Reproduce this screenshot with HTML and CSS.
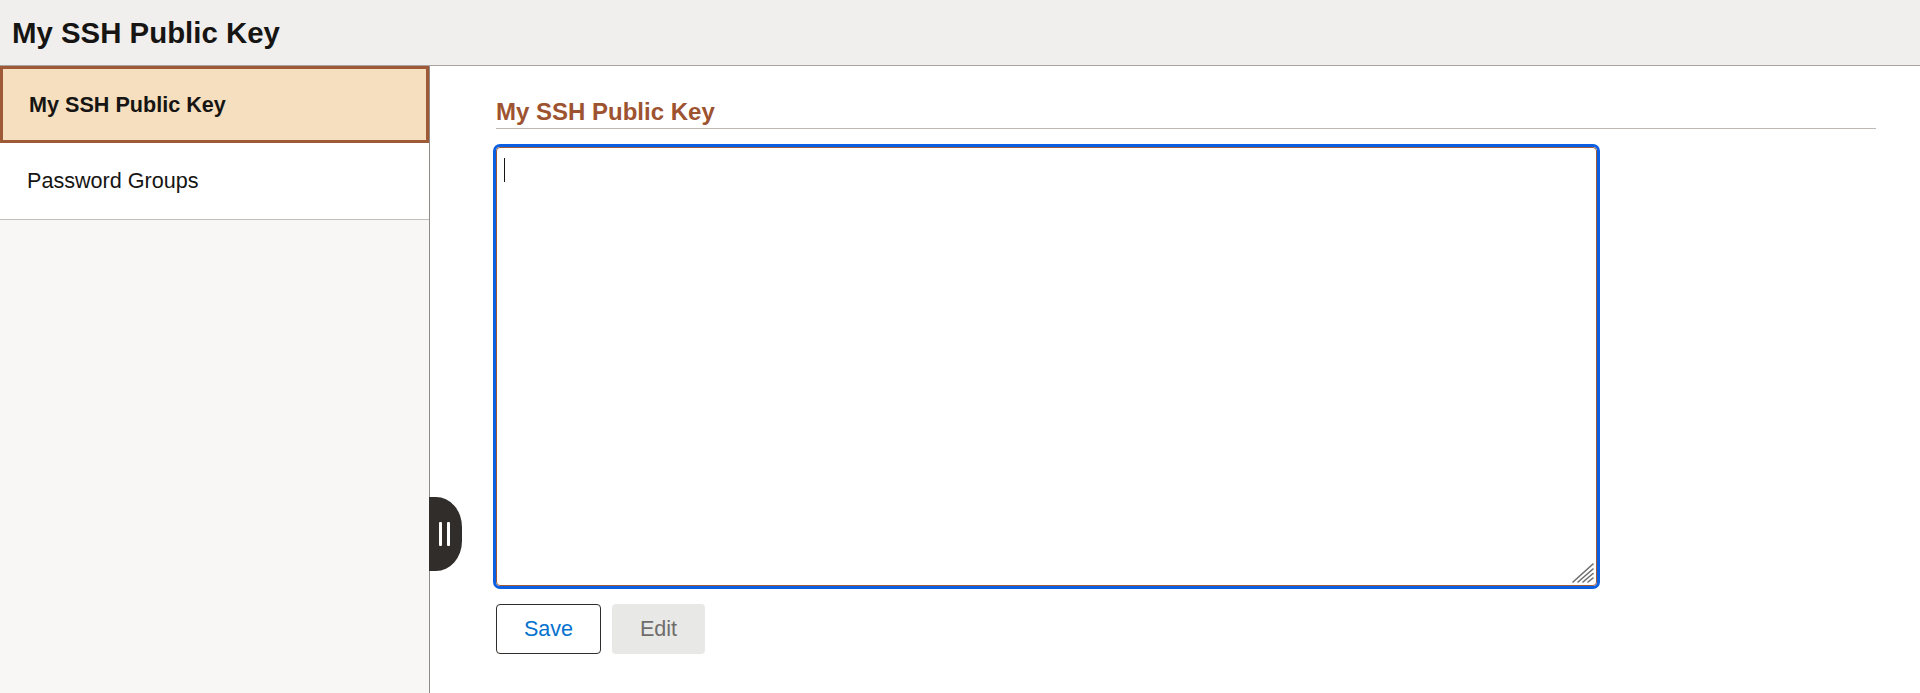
FILE: index.html
```html
<!DOCTYPE html>
<html lang="en">
<head>
    <meta charset="UTF-8">
    <meta name="viewport" content="width=device-width, initial-scale=1.0">
    <title>My SSH Public Key</title>
    <link rel="stylesheet" href="styles.css">
</head>
<body>
<header class="page-header">
    <h1>My SSH Public Key</h1>
</header>
<div class="layout">
    <aside class="sidebar">
        <ul class="nav-list">
            <li class="nav-item active">My SSH Public Key</li>
            <li class="nav-item">Password Groups</li>
        </ul>
        <div class="collapse-handle">
            <span class="bar"></span>
            <span class="bar"></span>
        </div>
    </aside>
    <main class="content">
        <h2 class="section-title">My SSH Public Key</h2>
        <div class="key-field">
            <textarea class="key-input" autofocus></textarea>
            <span class="caret"></span>
            <!-- resize grip -->
            <svg class="grip" width="22" height="20" viewBox="0 0 22 20">
                <g stroke="#6e6e6e" stroke-width="1.6" stroke-linecap="round">
                    <line x1="1" y1="19" x2="21" y2="1"/>
                    <line x1="6" y1="19" x2="21" y2="6"/>
                    <line x1="11" y1="19" x2="21" y2="10.5"/>
                    <line x1="16" y1="19" x2="21" y2="15"/>
                </g>
            </svg>
        </div>
        <div class="actions">
            <button class="btn btn-save">Save</button>
            <button class="btn btn-edit" disabled>Edit</button>
        </div>
    </main>
</div>
</body>
</html>
```

FILE: styles.css
```css
/* General Styles */
body {
    font-family: "Liberation Sans", Arial, sans-serif;
    margin: 0;
    padding: 0;
    color: #161513;
    background-color: #fff;
}

/* Header */
.page-header {
    display: flex;
    align-items: center;
    height: 65px;
    padding-left: 12px;
    background-color: #f1efed;
    border-bottom: 1px solid #a9a39f;
}

.page-header h1 {
    margin: 0;
    font-size: 29.4px;
    font-weight: 700;
}

/* Layout */
.layout {
    display: flex;
    height: calc(100vh - 66px);
}

/* Sidebar */
.sidebar {
    position: relative;
    width: 429px;
    flex-shrink: 0;
    background-color: #f8f7f5;
    border-right: 1px solid #8f8a86;
}

.nav-list {
    list-style: none;
    margin: 0;
    padding: 0;
}

.nav-item {
    display: flex;
    align-items: center;
    height: 76px;
    padding-left: 27px;
    font-size: 21.6px;
    background-color: #fff;
    border-bottom: 1px solid #c4bfbb;
}

.nav-item.active {
    height: 71px;
    padding-left: 26px;
    font-weight: 700;
    background-color: #f5dfbf;
    border: 3px solid #9e5a36;
}

.collapse-handle {
    position: absolute;
    top: 431px;
    left: 429px;
    width: 33px;
    height: 74px;
    display: flex;
    align-items: center;
    gap: 5px;
    padding-left: 10px;
    box-sizing: border-box;
    background-color: #312d2a;
    border-radius: 0 26px 26px 0 / 0 30px 30px 0;
}

.collapse-handle .bar {
    display: block;
    width: 3px;
    height: 24px;
    background-color: #fff;
    border-radius: 1px;
}

/* Main Content */
.content {
    flex: 1;
    padding: 32px 44px 0 66px;
}

.section-title {
    margin: 0;
    font-size: 24px;
    line-height: 28px;
    font-weight: 700;
    color: #9e5330;
    padding-bottom: 2px;
    border-bottom: 1px solid #bfb8b2;
}

.key-field {
    position: relative;
    width: 1101px;
    margin-top: 18px;
}

.key-input {
    display: block;
    box-sizing: border-box;
    width: 1101px;
    height: 439px;
    padding: 10px 7px;
    font-family: "Liberation Sans", Arial, sans-serif;
    font-size: 21.6px;
    color: #161513;
    border: 1px solid #9e5a36;
    border-radius: 4px;
    outline: 3px solid #0b5fe0;
    resize: none;
}

.caret {
    position: absolute;
    top: 11px;
    left: 8px;
    width: 1px;
    height: 24px;
    background-color: #161513;
}

.grip {
    position: absolute;
    right: 3px;
    bottom: 3px;
}

/* Buttons */
.actions {
    display: flex;
    gap: 11px;
    margin-top: 18px;
}

.btn {
    height: 50px;
    font-family: "Liberation Sans", Arial, sans-serif;
    font-size: 21.6px;
    border-radius: 4px;
    cursor: pointer;
}

.btn-save {
    width: 105px;
    color: #0572ce;
    background-color: #fff;
    border: 1px solid #312d2a;
}

.btn-edit {
    width: 93px;
    color: #6f6d6b;
    background-color: #e8e8e7;
    border: none;
    cursor: default;
}
```
